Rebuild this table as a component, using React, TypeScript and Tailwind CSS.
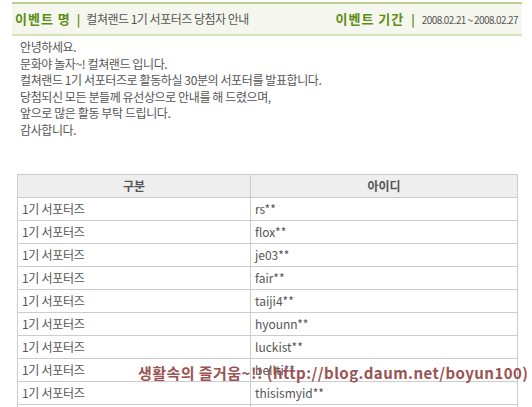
import React from "react";

const rows = [
  "rs**",
  "flox**",
  "je03**",
  "fair**",
  "taiji4**",
  "hyounn**",
  "luckist**",
  "bellti**",
  "thisismyid**",
  "",
];

const font = { fontFamily: '"Noto Sans CJK KR", "Noto Sans", sans-serif' };

export default function App() {
  return (
    <div className="relative w-[532px] h-[407px] overflow-hidden bg-white text-[12px] text-[#555]" style={font}>
      <div className="ml-[12px] mr-[10px] mt-[2px] h-[34px] border-t-2 border-b-2 border-t-[#bdd08f] border-b-[#d6e2bb] bg-[#f5f7ee] flex items-center pl-[3px] pr-[4px]">
        <span className="font-bold text-[#5b8d17] text-[13px] tracking-[1px]">이벤트 명</span>
        <span className="font-bold text-[#5b8d17] mx-[6px] text-[12px]">|</span>
        <span className="text-[#555] text-[12px] tracking-[-0.5px]">컬쳐랜드 1기 서포터즈 당첨자 안내</span>
        <span className="ml-auto font-bold text-[#5b8d17] text-[13px] tracking-[1px]">이벤트 기간</span>
        <span className="font-bold text-[#5b8d17] mx-[7px] text-[12px]">|</span>
        <span className="text-[#555] text-[10px] tracking-[-0.6px]">2008.02.21 ~ 2008.02.27</span>
      </div>
      <div className="pl-[20px] pt-[3px] leading-[16.6px] tracking-[-0.4px]">
        <div>안녕하세요.</div>
        <div>문화야 놀자~! 컬쳐랜드 입니다.</div>
        <div>컬쳐랜드 1기 서포터즈로 활동하실 30분의 서포터를 발표합니다.</div>
        <div>당첨되신 모든 분들께 유선상으로 안내를 해 드렸으며,</div>
        <div>앞으로 많은 활동 부탁 드립니다.</div>
        <div>감사합니다.</div>
      </div>
      <table className="ml-[17px] mt-[35px] w-[501px] border-collapse">
        <thead>
          <tr className="bg-[#eeeeee] h-[23px]">
            <th className="w-[233px] border border-[#cccccc] font-bold text-[#555] text-[12px]">구분</th>
            <th className="border border-[#cccccc] font-bold text-[#555] text-[12px]">아이디</th>
          </tr>
        </thead>
        <tbody>
          {rows.map((id, i) => (
            <tr key={i} className="h-[23px]">
              <td className="border border-[#cccccc] pl-[4px] tracking-[-0.3px]">1기 서포터즈</td>
              <td className="border border-[#cccccc] pl-[4px]">{id}</td>
            </tr>
          ))}
        </tbody>
      </table>
      <div
        className="absolute left-[138px] top-[362px] text-[15px] font-bold text-[#9b5252] whitespace-nowrap tracking-[0.45px]"
        style={font}
      >
        생활속의 즐거움~!! (http://blog.daum.net/boyun100)
      </div>
    </div>
  );
}
